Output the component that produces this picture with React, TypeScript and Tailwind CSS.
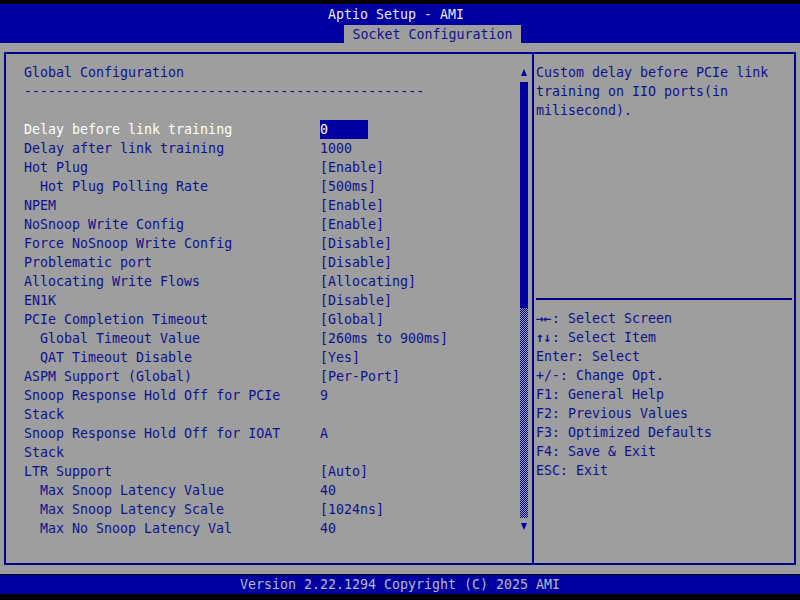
const BLUE = "bg-[#0000a0]";

type Row = { label: string; value?: string; indent?: boolean; selected?: boolean };

const rows: Row[] = [
  { label: "Delay before link training", value: "0", selected: true },
  { label: "Delay after link training", value: "1000" },
  { label: "Hot Plug", value: "[Enable]" },
  { label: "Hot Plug Polling Rate", value: "[500ms]", indent: true },
  { label: "NPEM", value: "[Enable]" },
  { label: "NoSnoop Write Config", value: "[Enable]" },
  { label: "Force NoSnoop Write Config", value: "[Disable]" },
  { label: "Problematic port", value: "[Disable]" },
  { label: "Allocating Write Flows", value: "[Allocating]" },
  { label: "EN1K", value: "[Disable]" },
  { label: "PCIe Completion Timeout", value: "[Global]" },
  { label: "Global Timeout Value", value: "[260ms to 900ms]", indent: true },
  { label: "QAT Timeout Disable", value: "[Yes]", indent: true },
  { label: "ASPM Support (Global)", value: "[Per-Port]" },
  { label: "Snoop Response Hold Off for PCIe", value: "9" },
  { label: "Stack" },
  { label: "Snoop Response Hold Off for IOAT", value: "A" },
  { label: "Stack" },
  { label: "LTR Support", value: "[Auto]" },
  { label: "Max Snoop Latency Value", value: "40", indent: true },
  { label: "Max Snoop Latency Scale", value: "[1024ns]", indent: true },
  { label: "Max No Snoop Latency Val", value: "40", indent: true },
];

const helpKeys = [
  ["→←", ": Select Screen"],
  ["↑↓", ": Select Item"],
  ["", "Enter: Select"],
  ["", "+/-: Change Opt."],
  ["", "F1: General Help"],
  ["", "F2: Previous Values"],
  ["", "F3: Optimized Defaults"],
  ["", "F4: Save & Exit"],
  ["", "ESC: Exit"],
];

function Arrow({ down }: { down?: boolean }) {
  return (
    <svg viewBox="0 0 8 7" className="h-[7px] w-[8px]">
      <path d={down ? "M1 0h6L4 7z" : "M4 0l3 7H1z"} fill="#0000a0" />
    </svg>
  );
}

export default function App() {
  return (
    <div
      className="flex h-[600px] w-[800px] flex-col bg-black text-[13.3px] leading-[19px] text-[#10108c]"
      style={{ fontFamily: '"DejaVu Sans Mono", "Liberation Mono", monospace' }}
    >
      <div className="h-[4px]" />
      <div className={`${BLUE} h-[39px]`}>
        <div className="flex h-[21px] items-center justify-center pr-[8px] text-[#e8e8f0]">
          Aptio Setup - AMI
        </div>
        <div className="ml-[344px] h-[19px] w-[177px] bg-[#9e9e9e] text-center leading-[20px]">
          Socket Configuration
        </div>
      </div>

      <div className="h-[531px] bg-[#9e9e9e] px-[4px] pt-[9px] pb-[9px]">
        <div className="flex h-full border-2 border-[#000090]">
          {/* left: settings list */}
          <div className="flex w-[526px]">
            <div className="flex-1 pl-[18px] pt-[8.5px]">
              <div>Global Configuration</div>
              <div>--------------------------------------------------</div>
              <div>&nbsp;</div>
              {rows.map((r, i) => (
                <div key={i} className="flex">
                  <div
                    className={[
                      "w-[296px] whitespace-pre",
                      r.indent ? "pl-[16px]" : "",
                      r.selected ? "text-white" : "",
                    ].join(" ")}
                  >
                    {r.label}
                  </div>
                  {r.value &&
                    (r.selected ? (
                      <div className={`${BLUE} w-[48px] text-white`}>{r.value}</div>
                    ) : (
                      <div>{r.value}</div>
                    ))}
                </div>
              ))}
            </div>
            <div className="mr-[4px] flex w-[8px] flex-col items-center">
              <div className="h-[15px]" />
              <Arrow />
              <div className="h-[6px]" />
              <div className={`${BLUE} h-[226px] w-[8px]`} />
              <div className="h-[210px] w-[8px] bg-[repeating-conic-gradient(#0000a0_0_25%,transparent_0_50%)] bg-[length:2px_2px]" />
              <div className="h-[5px]" />
              <Arrow down />
            </div>
          </div>

          {/* right: help */}
          <div className="flex flex-1 flex-col border-l-2 border-[#000090]">
            <div className="mx-[2px] h-[246px] border-b-2 border-[#000090] pt-[8.5px]">
              <div>Custom delay before PCIe link</div>
              <div>training on IIO ports(in</div>
              <div>milisecond).</div>
            </div>
            <div className="pl-[2px] pt-[9px]">
              {helpKeys.map(([k, t], i) => (
                <div key={i} className="flex h-[19px] items-center whitespace-pre">
                  {k && (
                    <span className="inline-block w-[16px] overflow-hidden font-bold tracking-[-0.5px]">
                      {k}
                    </span>
                  )}
                  {t}
                </div>
              ))}
            </div>
          </div>
        </div>
      </div>

      <div className={`${BLUE} mt-[1px] flex h-[19px] items-center justify-center text-[#b8b8c8]`}>
        Version 2.22.1294 Copyright (C) 2025 AMI
      </div>
      <div className="h-[6px]" />
    </div>
  );
}
